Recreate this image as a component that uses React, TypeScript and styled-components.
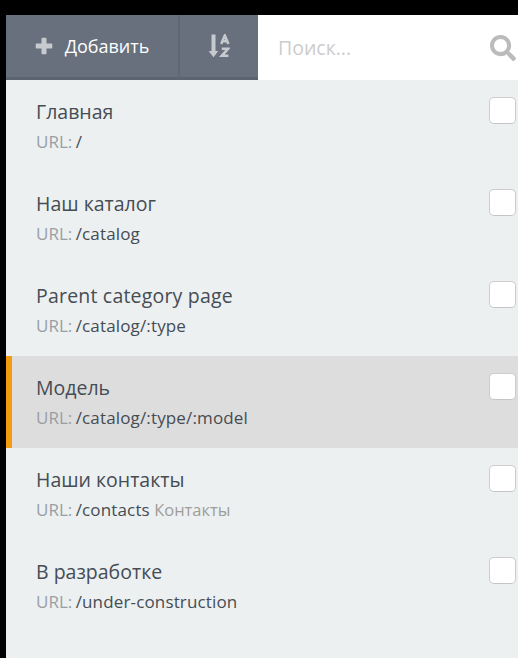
import styled, { createGlobalStyle } from "styled-components";
import { FaSearch } from "react-icons/fa";

const GlobalStyle = createGlobalStyle`
  html, body {
    margin: 0;
    height: 100%;
    background: #000;
  }
  body {
    font-family: "Open Sans", "Liberation Sans", sans-serif;
  }
`;

const Page = styled.div`
  width: 518px;
  height: 658px;
  box-sizing: border-box;
  padding: 15px 0 0 6px;
  overflow: hidden;
`;

const Panel = styled.div`
  height: 643px;
  background: #ecf0f1;
  display: flex;
  flex-direction: column;
`;

const Toolbar = styled.div`
  height: 65px;
  display: flex;
  flex-shrink: 0;
`;

const ToolButton = styled.button<{ $width: number }>`
  width: ${(p) => p.$width}px;
  height: 65px;
  box-sizing: border-box;
  padding: 0;
  border: 0;
  border-bottom: 3px solid #5b6470;
  background: #67707c;
  color: #fff;
  font-family: inherit;
  font-size: 18px;
  display: flex;
  align-items: center;
  justify-content: center;
  gap: 12px;
  & + & {
    border-left: 2px solid #5f6874;
  }
  svg {
    color: #c6c9cd;
  }
`;

const SearchBox = styled.div`
  flex: 1;
  display: flex;
  align-items: center;
  background: #fff;
  padding: 0 0 0 20px;
  overflow: hidden;
`;

const SearchInput = styled.input`
  flex: 1;
  min-width: 0;
  padding: 0;
  border: 0;
  outline: 0;
  font-family: inherit;
  font-size: 19.5px;
  color: #444;
  &::placeholder {
    color: #ccc;
    opacity: 1;
  }
`;

const SearchIcon = styled(FaSearch)`
  flex-shrink: 0;
  color: #bbb;
  margin-right: 2px;
`;

const List = styled.div`
  display: flex;
  flex-direction: column;
`;

const Row = styled.div<{ $active?: boolean }>`
  height: 92px;
  box-sizing: border-box;
  padding: 19px 0 0 ${(p) => (p.$active ? 24 : 30)}px;
  position: relative;
  background: ${(p) => (p.$active ? "#dedddd" : "transparent")};
  border-left: ${(p) => (p.$active ? "6px solid #f39c12" : "0")};
`;

const Title = styled.div<{ $latin?: boolean }>`
  font-size: 19.5px;
  line-height: 26px;
  color: #454c54;
  letter-spacing: ${(p) => (p.$latin ? "0.2px" : "0")};
`;

const Url = styled.div`
  font-size: 17px;
  line-height: 24px;
  margin-top: 5px;
  color: #454c54;
`;

const Muted = styled.span`
  color: #9a9ea4;
  margin-right: -1px;
`;

const Path = styled.span`
  letter-spacing: 0.15px;
`;

const Alias = styled.span`
  color: #a09d99;
  font-size: 16.5px;
`;

const Check = styled.span`
  position: absolute;
  top: 17px;
  right: 2px;
  width: 27px;
  height: 27px;
  box-sizing: border-box;
  background: #fff;
  border: 1px solid #ccc;
  border-bottom-color: #c4c4c4;
  border-radius: 5px;
`;

const PlusIcon = () => (
  <svg width="18" height="18" viewBox="0 0 18 18" fill="currentColor">
    <path d="M6.500 1.500A.8.8 0 0 1 7.300.7h3.400a.8.8 0 0 1 .8.8v5h5a.8.8 0 0 1 .8.8v3.400a.8.8 0 0 1-.8.8h-5v5a.8.8 0 0 1-.8.8H7.300a.8.8 0 0 1-.8-.8v-5h-5a.8.8 0 0 1-.8-.8V7.300a.8.8 0 0 1 .8-.8h5z" />
  </svg>
);

const SortIcon = () => (
  <svg width="21" height="24" viewBox="0 0 21 24" fill="none" stroke="currentColor">
    <path d="M2.500 0.500h4v16.500h2.800L4.500 23.300-.3 17h2.800z" fill="currentColor" stroke="none" />
    <path d="M12.200 10 15.800 1.600 19.400 10M13.400 7.200h4.800" strokeWidth="2.600" />
    <path d="M12.800 14.800h6.200L12.800 21.800h6.600" strokeWidth="2.600" />
  </svg>
);

const pages = [
  { title: "Главная", url: "/" },
  { title: "Наш каталог", url: "/catalog" },
  { title: "Parent category page", url: "/catalog/:type", latin: true },
  { title: "Модель", url: "/catalog/:type/:model", active: true },
  { title: "Наши контакты", url: "/contacts", alias: "Контакты" },
  { title: "В разработке", url: "/under-construction" },
];

export default function App() {
  return (
    <Page>
      <GlobalStyle />
      <Panel>
        <Toolbar>
          <ToolButton $width={172}>
            <PlusIcon />
            Добавить
          </ToolButton>
          <ToolButton $width={80}>
            <SortIcon />
          </ToolButton>
          <SearchBox>
            <SearchInput placeholder="Поиск..." />
            <SearchIcon size={26} />
          </SearchBox>
        </Toolbar>
        <List>
          {pages.map((page) => (
            <Row key={page.url} $active={page.active}>
              <Title $latin={page.latin}>{page.title}</Title>
              <Url>
                <Muted>URL:</Muted> <Path>{page.url}</Path>
                {page.alias ? <Alias> {page.alias}</Alias> : null}
              </Url>
              <Check />
            </Row>
          ))}
        </List>
      </Panel>
    </Page>
  );
}
